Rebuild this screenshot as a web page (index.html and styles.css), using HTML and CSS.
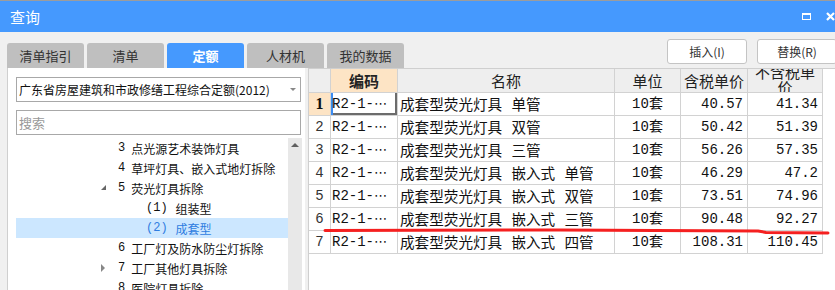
FILE: index.html
```html
<!DOCTYPE html>
<html lang="zh-CN">
<head>
    <meta charset="UTF-8">
    <title>查询</title>
    <link rel="stylesheet" href="styles.css">
</head>
<body>

    <div class="titlebar">
        <span class="title">查询</span>
        <span class="winbtns">
            <span class="max_btn"></span>
            <svg class="close_btn" width="9" height="9" viewBox="0 0 9 9">
                <path d="M1 1 L8 8 M8 1 L1 8" stroke="#fff" stroke-width="2.2" fill="none"/>
            </svg>
        </span>
    </div>

    <div class="toolbar">
        <div class="tabs">
            <div class="tab">清单指引</div>
            <div class="tab">清单</div>
            <div class="tab active">定额</div>
            <div class="tab">人材机</div>
            <div class="tab">我的数据</div>
        </div>
        <div class="actions">
            <button class="btn">插入(I)</button>
            <button class="btn">替换(R)</button>
        </div>
    </div>

    <div class="main">
        <!-- left: quota library tree -->
        <div class="side">
            <div class="select">
                <span>广东省房屋建筑和市政修缮工程综合定额(2012)</span>
                <i class="caret"></i>
            </div>
            <div class="search">搜索</div>
            <div class="treebox">
                <div class="tree">
                    <div class="node lvl2"><i class="twisty"></i><span class="num">3</span>点光源艺术装饰灯具</div>
                    <div class="node lvl2"><i class="twisty"></i><span class="num">4</span>草坪灯具、嵌入式地灯拆除</div>
                    <div class="node lvl2"><i class="twisty open"></i><span class="num">5</span>荧光灯具拆除</div>
                    <div class="node lvl3"><i class="twisty"></i><span class="num">(1)</span>组装型</div>
                    <div class="node lvl3 selected"><i class="twisty"></i><span class="num">(2)</span>成套型</div>
                    <div class="node lvl2"><i class="twisty"></i><span class="num">6</span>工厂灯及防水防尘灯拆除</div>
                    <div class="node lvl2"><i class="twisty closed"></i><span class="num">7</span>工厂其他灯具拆除</div>
                    <div class="node lvl2"><i class="twisty"></i><span class="num">8</span>医院灯具拆除</div>
                </div>
                <div class="vscroll"><i class="up"></i></div>
            </div>
        </div>

        <!-- right: result grid -->
        <div class="gridwrap">
            <div class="grid">
                <div class="hd corner"></div>
                <div class="hd hd_code">编码</div>
                <div class="hd">名称</div>
                <div class="hd">单位</div>
                <div class="hd">含税单价</div>
                <div class="hd hd_wrap"><div>不含税单价</div></div>

                <div class="c rn rn_cur">1</div>
                <div class="c code cur">R2-1-<span class="dots">⋯</span></div>
                <div class="c name">成套型荧光灯具 单管</div>
                <div class="c unit">10套</div>
                <div class="c price">40.57</div>
                <div class="c price">41.34</div>

                <div class="c rn">2</div>
                <div class="c code">R2-1-<span class="dots">⋯</span></div>
                <div class="c name">成套型荧光灯具 双管</div>
                <div class="c unit">10套</div>
                <div class="c price">50.42</div>
                <div class="c price">51.39</div>

                <div class="c rn">3</div>
                <div class="c code">R2-1-<span class="dots">⋯</span></div>
                <div class="c name">成套型荧光灯具 三管</div>
                <div class="c unit">10套</div>
                <div class="c price">56.26</div>
                <div class="c price">57.35</div>

                <div class="c rn">4</div>
                <div class="c code">R2-1-<span class="dots">⋯</span></div>
                <div class="c name">成套型荧光灯具 嵌入式 单管</div>
                <div class="c unit">10套</div>
                <div class="c price">46.29</div>
                <div class="c price">47.2</div>

                <div class="c rn">5</div>
                <div class="c code">R2-1-<span class="dots">⋯</span></div>
                <div class="c name">成套型荧光灯具 嵌入式 双管</div>
                <div class="c unit">10套</div>
                <div class="c price">73.51</div>
                <div class="c price">74.96</div>

                <div class="c rn">6</div>
                <div class="c code">R2-1-<span class="dots">⋯</span></div>
                <div class="c name">成套型荧光灯具 嵌入式 三管</div>
                <div class="c unit">10套</div>
                <div class="c price">90.48</div>
                <div class="c price">92.27</div>

                <div class="c rn">7</div>
                <div class="c code">R2-1-<span class="dots">⋯</span></div>
                <div class="c name">成套型荧光灯具 嵌入式 四管</div>
                <div class="c unit">10套</div>
                <div class="c price">108.31</div>
                <div class="c price">110.45</div>
            </div>
        </div>
    </div>

    <!-- hand drawn red underline over the grid -->
    <svg class="mark" width="835" height="290" viewBox="0 0 835 290">
        <path d="M325 230.5 L420 230.2 L560 230 L655 230.6 L758 231 L766 232.4 L828 233"
              stroke="#f52020" stroke-width="3" fill="none" stroke-linecap="round" stroke-linejoin="round"/>
    </svg>

</body>
</html>
```

FILE: styles.css
```css
        * {
            box-sizing: border-box;
        }
        html, body {
            margin: 0;
            height: 290px;
            overflow: hidden;
        }
        body {
            position: relative;
            background-color: #f0f0f0;
            font-family: "Noto Sans CJK SC", sans-serif;
            color: #222;
        }

        /* window title */
        .titlebar {
            height: 32px;
            border-top: 1px solid #9c9c9c;
            background-color: #4599fe;
            display: flex;
            align-items: center;
            padding-left: 10px;
        }
        .title {
            color: #fff;
            font-size: 15px;
        }
        .winbtns {
            margin-left: auto;
            display: flex;
            align-items: center;
            gap: 15px;
            margin-top: -1px;
        }
        .max_btn {
            width: 9px;
            height: 7px;
            border: 1px solid #fff;
            border-top-width: 2px;
        }
        .close_btn {
            display: block;
        }

        /* tabs + buttons */
        .toolbar {
            height: 36px;
            display: flex;
            justify-content: space-between;
        }
        .tabs {
            display: flex;
            align-items: flex-end;
            gap: 3px;
            padding-left: 7px;
        }
        .tab {
            width: 77px;
            height: 25px;
            background-color: #bfbfbf;
            border-radius: 3px 3px 0 0;
            font-size: 13px;
            line-height: 25px;
            text-align: center;
            color: #333;
        }
        .tab.active {
            background-color: #4599fe;
            color: #fff;
            font-weight: bold;
        }
        .actions {
            display: flex;
            gap: 10px;
            padding-top: 7px;
            margin-right: -2px;
        }
        .btn {
            width: 80px;
            height: 25px;
            background: #fff;
            border: 1px solid #c4c4c4;
            border-radius: 3px;
            font-family: "Noto Sans CJK SC", sans-serif;
            font-size: 12px;
            color: #333;
            padding: 0;
        }

        .main {
            display: flex;
            height: 222px;
        }

        /* left side panel */
        .side {
            width: 298px;
            margin-left: 7px;
            background: #fff;
            border-left: 1px solid #cfcfcf;
            padding: 9px 4px 0 8px;
            overflow: hidden;
        }
        .select, .search {
            height: 25px;
            border: 1px solid #a8a8a8;
            font-size: 12px;
            display: flex;
            align-items: center;
            padding-left: 2px;
        }
        .select {
            justify-content: space-between;
            color: #111;
        }
        .caret {
            width: 0;
            height: 0;
            border-left: 3px solid transparent;
            border-right: 3px solid transparent;
            border-top: 3px solid #888;
            margin-right: 4px;
        }
        .search {
            margin-top: 8px;
            color: #999;
            font-size: 13px;
        }
        .treebox {
            display: flex;
            margin-top: 3px;
            height: 160px;
            margin-right: -1px;
        }
        .tree {
            flex: 1;
        }
        .node {
            height: 20px;
            display: flex;
            align-items: center;
            font-size: 12px;
            color: #111;
            white-space: nowrap;
        }
        .node.lvl2 {
            padding-left: 84px;
        }
        .node.lvl3 {
            padding-left: 112px;
        }
        .node.selected {
            background-color: #cce7ff;
            color: #2f7de1;
        }
        .twisty {
            width: 18px;
            height: 8px;
            position: relative;
        }
        .twisty.open::before {
            content: "";
            position: absolute;
            left: 1px;
            top: 1px;
            border-left: 5px solid transparent;
            border-bottom: 5px solid #666;
        }
        .twisty.closed::before {
            content: "";
            position: absolute;
            left: 1px;
            top: 0;
            border-top: 4px solid transparent;
            border-bottom: 4px solid transparent;
            border-left: 4px solid #888;
        }
        .num {
            margin-right: 6px;
            font-family: "Liberation Mono", monospace;
            font-size: 12px;
        }
        .lvl3 .num {
            margin-right: 8px;
        }
        .vscroll {
            width: 14px;
            background-color: #e8e8e8;
            display: flex;
            justify-content: center;
            padding-top: 5px;
        }
        .up {
            width: 0;
            height: 0;
            border-left: 4px solid transparent;
            border-right: 4px solid transparent;
            border-bottom: 4px solid #606060;
        }

        /* result grid */
        .gridwrap {
            flex: 1;
            margin-left: 3px;
            background: #fff;
            border-left: 1px solid #cfcfcf;
            border-top: 1px solid #cfcfcf;
        }
        .grid {
            display: grid;
            grid-template-columns: 22px 67px 217px 66px 67px 75px;
            grid-template-rows: 24px repeat(7, 23px);
            width: 514px;
        }
        .hd, .c {
            border-right: 1px solid #d2d2d2;
            border-bottom: 1px solid #d2d2d2;
            white-space: nowrap;
            overflow: hidden;
        }
        .hd {
            background-color: #eeeeee;
            font-size: 15px;
            line-height: 23px;
            text-align: center;
            color: #222;
        }
        .hd_code {
            background-color: #fde4c5;
            font-weight: bold;
        }
        .hd_wrap {
            white-space: normal;
            padding: 0 4px;
        }
        .hd_wrap div {
            line-height: 15px;
            margin-top: -5px;
        }
        .c {
            font-family: "Liberation Mono", "Noto Sans CJK SC", monospace;
            font-size: 14px;
            line-height: 22px;
            color: #111;
        }
        .rn {
            text-align: center;
            color: #333;
        }
        .rn_cur {
            background-color: #fde4c5;
            font-weight: bold;
            font-family: "Liberation Serif", serif;
            font-size: 16px;
            color: #111;
        }
        .code {
            padding-left: 1px;
        }
        .dots {
            font-family: "DejaVu Sans", sans-serif;
            font-size: 13px;
        }
        .code.cur {
            box-shadow: inset 2px 0 0 #3b8cf2, inset -2px -2px 0 #6c6c6c;
        }
        .name {
            font-family: "Noto Sans CJK SC", sans-serif;
            font-size: 14.6px;
            padding-left: 2px;
            word-spacing: 6px;
        }
        .unit {
            text-align: center;
        }
        .price {
            text-align: right;
            padding-right: 4px;
        }

        .mark {
            position: absolute;
            left: 0;
            top: 0;
            pointer-events: none;
        }
```
